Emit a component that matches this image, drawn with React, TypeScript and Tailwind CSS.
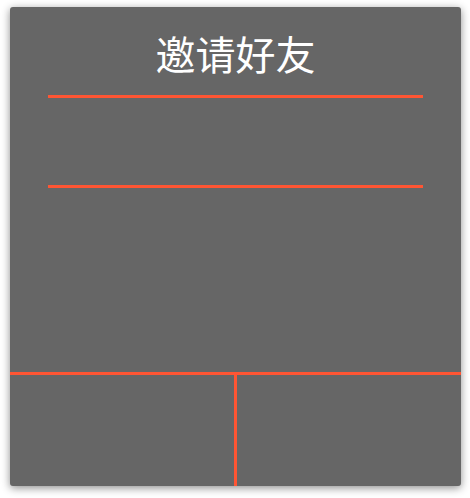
import React from "react";

export default function App() {
  return (
    <div className="w-[470px] h-[498px] bg-white pt-[7px] pl-[10px]">
      <div
        className="w-[451px] h-[479px] bg-[#666666] rounded-[3px] shadow-[0_2px_8px_rgba(0,0,0,0.45)] flex flex-col overflow-hidden"
        style={{ fontFamily: '"Noto Sans CJK SC", "Noto Sans", sans-serif' }}
      >
        <div className="h-[88px] flex items-center justify-center text-white text-[40px] leading-none pt-[4px]">
          邀请好友
        </div>
        <div className="mx-[38px] h-[3px] bg-[#ff5533]" />
        <div className="h-[87px]" />
        <div className="mx-[38px] h-[3px] bg-[#ff5533]" />
        <div className="flex-1" />
        <div className="h-[3px] bg-[#ff5533]" />
        <div className="h-[111px] flex">
          <div className="flex-1" />
          <div className="w-[3px] bg-[#ff5533]" />
          <div className="flex-1" />
        </div>
      </div>
    </div>
  );
}
